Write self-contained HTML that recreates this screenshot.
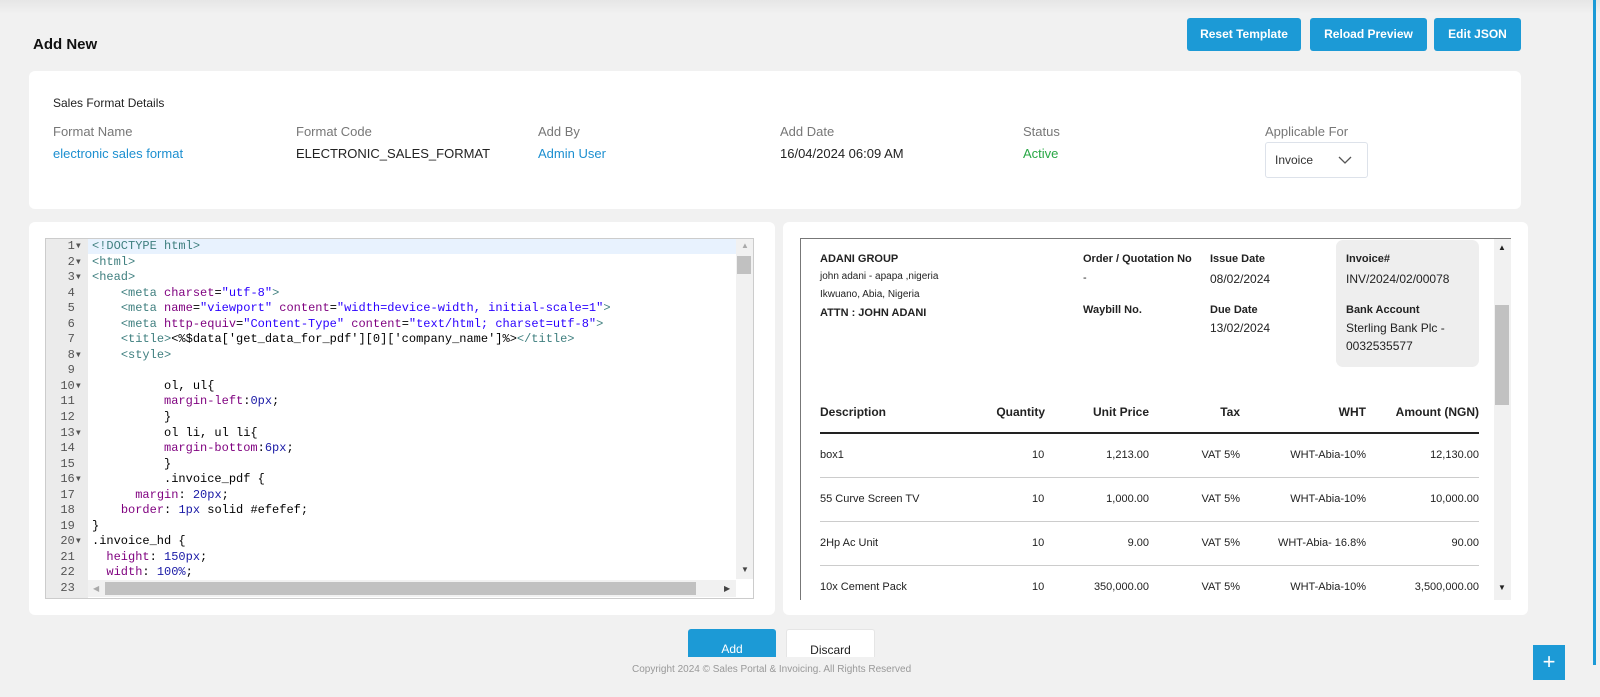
<!DOCTYPE html>
<html><head><meta charset="utf-8"><style>
*{margin:0;padding:0;box-sizing:border-box}
body{width:1600px;height:697px;background:#f1f1f1;font-family:"Liberation Sans",sans-serif;position:relative;overflow:hidden;color:#222}
.a{position:absolute;white-space:nowrap}
.card{position:absolute;background:#fff;border-radius:6px}
.btn{position:absolute;background:#1c9ad6;color:#fff;font-weight:bold;font-size:12px;border-radius:3px;text-align:center;line-height:33px;top:18px;height:33px}
.lbl{font-size:13px;color:#777}
.val{font-size:13px}
.code{position:absolute;left:92px;font-family:"Liberation Mono",monospace;font-size:12px;line-height:15.55px;color:#000}
.gut{position:absolute;left:46px;width:42px;text-align:right;padding-right:6px;font-family:"Liberation Mono",monospace;font-size:12px;line-height:15.55px;color:#555}
.t{color:#3f7f7f}.at{color:#7f007f}.s{color:#2a00ff}.p{color:#7f007f}.n{color:#1a1aa6}
.inv{font-size:11px;color:#222}
.b{font-weight:bold}
.hl{font-size:12px;font-weight:bold}
</style></head><body>
<div class="a" style="left:0;top:0;width:1600px;height:14px;background:linear-gradient(#e6e6e6,#f1f1f1)"></div>
<div class="a" style="left:33px;top:36px;font-size:15px;font-weight:bold;color:#111">Add New</div>
<div class="btn" style="left:1187px;width:114px">Reset Template</div>
<div class="btn" style="left:1310px;width:117px">Reload Preview</div>
<div class="btn" style="left:1434px;width:87px">Edit JSON</div>
<div class="a" style="left:1593px;top:0;width:3px;height:665px;background:#1c9ad6"></div>

<div class="card" style="left:29px;top:71px;width:1492px;height:138px"></div>
<div class="a" style="left:53px;top:96px;font-size:12px">Sales Format Details</div>
<div class="a lbl" style="left:53px;top:124px">Format Name</div>
<div class="a val" style="left:53px;top:146px;color:#1c8fd0">electronic sales format</div>
<div class="a lbl" style="left:296px;top:124px">Format Code</div>
<div class="a val" style="left:296px;top:146px">ELECTRONIC_SALES_FORMAT</div>
<div class="a lbl" style="left:538px;top:124px">Add By</div>
<div class="a val" style="left:538px;top:146px;color:#1c8fd0">Admin User</div>
<div class="a lbl" style="left:780px;top:124px">Add Date</div>
<div class="a val" style="left:780px;top:146px">16/04/2024 06:09 AM</div>
<div class="a lbl" style="left:1023px;top:124px">Status</div>
<div class="a val" style="left:1023px;top:146px;color:#28a745">Active</div>
<div class="a lbl" style="left:1265px;top:124px">Applicable For</div>
<div class="a" style="left:1265px;top:142px;width:103px;height:36px;border:1px solid #dde2ea;border-radius:3px;font-size:12px;padding:10px 0 0 9px;color:#333">Invoice
<svg style="position:absolute;left:72px;top:13px" width="14" height="9" viewBox="0 0 14 9"><path d="M1 1l6 6 6-6" fill="none" stroke="#555" stroke-width="1.3"/></svg></div>

<div class="card" style="left:29px;top:222px;width:746px;height:393px"></div>
<div class="a" style="left:45px;top:238px;width:709px;height:361px;border:1px solid #ccc;background:#fff"></div>
<div class="a" style="left:46px;top:239px;width:42px;height:359px;background:#ebebeb"></div>
<div class="a" style="left:88px;top:239px;width:648px;height:15px;background:#e8f2fe"></div>
<div class="a" style="left:736px;top:239px;width:17px;height:340px;background:#f1f1f1"></div>
<div class="a" style="left:737px;top:256px;width:14px;height:18px;background:#c1c1c1"></div>
<div class="a" style="left:88px;top:580px;width:648px;height:17px;background:#f1f1f1"></div>
<div class="a" style="left:105px;top:582px;width:591px;height:13px;background:#c1c1c1"></div>
<div class="a" style="left:741px;top:241px;font-size:8px;color:#aaa">▲</div>
<div class="a" style="left:741px;top:565px;font-size:8px;color:#444">▼</div>
<div class="a" style="left:724px;top:584px;font-size:8px;color:#444">▶</div>
<div class="a" style="left:93px;top:584px;font-size:8px;color:#aaa">◀</div>
<div class="gut" style="top:239px">1▾<br>2▾<br>3▾<br>4&nbsp;<br>5&nbsp;<br>6&nbsp;<br>7&nbsp;<br>8▾<br>9&nbsp;<br>10▾<br>11&nbsp;<br>12&nbsp;<br>13▾<br>14&nbsp;<br>15&nbsp;<br>16▾<br>17&nbsp;<br>18&nbsp;<br>19&nbsp;<br>20▾<br>21&nbsp;<br>22&nbsp;<br>23&nbsp;</div>
<div class="code" style="top:239px;white-space:pre"><span class="t">&lt;!DOCTYPE html&gt;</span>
<span class="t">&lt;html&gt;</span>
<span class="t">&lt;head&gt;</span>
    <span class="t">&lt;meta</span> <span class="at">charset</span>=<span class="s">"utf-8"</span><span class="t">&gt;</span>
    <span class="t">&lt;meta</span> <span class="at">name</span>=<span class="s">"viewport"</span> <span class="at">content</span>=<span class="s">"width=device-width, initial-scale=1"</span><span class="t">&gt;</span>
    <span class="t">&lt;meta</span> <span class="at">http-equiv</span>=<span class="s">"Content-Type"</span> <span class="at">content</span>=<span class="s">"text/html; charset=utf-8"</span><span class="t">&gt;</span>
    <span class="t">&lt;title&gt;</span>&lt;%$data['get_data_for_pdf'][0]['company_name']%&gt;<span class="t">&lt;/title&gt;</span>
    <span class="t">&lt;style&gt;</span>

          ol, ul{
          <span class="p">margin-left</span>:<span class="n">0px</span>;
          }
          ol li, ul li{
          <span class="p">margin-bottom</span>:<span class="n">6px</span>;
          }
          .invoice_pdf {
      <span class="p">margin</span>: <span class="n">20px</span>;
    <span class="p">border</span>: <span class="n">1px</span> solid #efefef;
}
.invoice_hd {
  <span class="p">height</span>: <span class="n">150px</span>;
  <span class="p">width</span>: <span class="n">100%</span>;
</div>

<div class="card" style="left:783px;top:222px;width:745px;height:393px"></div>
<div class="a" style="left:800px;top:238px;width:711px;height:362px;border-top:1px solid #777;border-left:1px solid #777;background:#fff"></div>
<div class="a" style="left:1494px;top:239px;width:17px;height:361px;background:#f1f1f1"></div>
<div class="a" style="left:1495px;top:305px;width:14px;height:100px;background:#c1c1c1"></div>
<div class="a" style="left:1498px;top:243px;font-size:8px">▲</div>
<div class="a" style="left:1498px;top:583px;font-size:8px">▼</div>
<div class="a" style="left:1336px;top:240px;width:143px;height:127px;background:#eee;border-radius:7px"></div>
<div class="a inv b" style="left:820px;top:253px">ADANI GROUP</div>
<div class="a" style="left:820px;top:271px;font-size:10px">john adani - apapa ,nigeria</div>
<div class="a" style="left:820px;top:289px;font-size:10px">Ikwuano, Abia, Nigeria</div>
<div class="a inv b" style="left:820px;top:307px">ATTN : JOHN ADANI</div>
<div class="a inv b" style="left:1083px;top:253px">Order / Quotation No</div>
<div class="a inv" style="left:1083px;top:272px">-</div>
<div class="a inv b" style="left:1083px;top:304px">Waybill No.</div>
<div class="a inv b" style="left:1210px;top:253px">Issue Date</div>
<div class="a" style="left:1210px;top:272px;font-size:12px">08/02/2024</div>
<div class="a inv b" style="left:1210px;top:304px">Due Date</div>
<div class="a" style="left:1210px;top:321px;font-size:12px">13/02/2024</div>
<div class="a inv b" style="left:1346px;top:253px">Invoice#</div>
<div class="a" style="left:1346px;top:272px;font-size:12px">INV/2024/02/00078</div>
<div class="a inv b" style="left:1346px;top:304px">Bank Account</div>
<div class="a" style="left:1346px;top:321px;font-size:12px">Sterling Bank Plc -</div>
<div class="a" style="left:1346px;top:339px;font-size:12px">0032535577</div>

<div class="a hl" style="left:820px;top:405px">Description</div>
<div class="a hl" style="right:555px;top:405px">Quantity</div>
<div class="a hl" style="right:451px;top:405px">Unit Price</div>
<div class="a hl" style="right:360px;top:405px">Tax</div>
<div class="a hl" style="right:234px;top:405px">WHT</div>
<div class="a hl" style="right:121px;top:405px">Amount (NGN)</div>
<div class="a" style="left:820px;top:432px;width:659px;height:2px;background:#222"></div>
<div class="a" style="left:820px;top:477px;width:659px;height:1px;background:#ccc"></div>
<div class="a" style="left:820px;top:521px;width:659px;height:1px;background:#ccc"></div>
<div class="a" style="left:820px;top:565px;width:659px;height:1px;background:#ccc"></div>

<div class="a inv" style="left:820px;top:449px">box1</div>
<div class="a inv" style="left:1032px;top:449px">10</div>
<div class="a inv" style="right:451px;top:449px">1,213.00</div>
<div class="a inv" style="right:360px;top:449px">VAT 5%</div>
<div class="a inv" style="right:234px;top:449px">WHT-Abia-10%</div>
<div class="a inv" style="right:121px;top:449px">12,130.00</div>

<div class="a inv" style="left:820px;top:493px">55 Curve Screen TV</div>
<div class="a inv" style="left:1032px;top:493px">10</div>
<div class="a inv" style="right:451px;top:493px">1,000.00</div>
<div class="a inv" style="right:360px;top:493px">VAT 5%</div>
<div class="a inv" style="right:234px;top:493px">WHT-Abia-10%</div>
<div class="a inv" style="right:121px;top:493px">10,000.00</div>

<div class="a inv" style="left:820px;top:537px">2Hp Ac Unit</div>
<div class="a inv" style="left:1032px;top:537px">10</div>
<div class="a inv" style="right:451px;top:537px">9.00</div>
<div class="a inv" style="right:360px;top:537px">VAT 5%</div>
<div class="a inv" style="right:234px;top:537px">WHT-Abia- 16.8%</div>
<div class="a inv" style="right:121px;top:537px">90.00</div>

<div class="a inv" style="left:820px;top:581px">10x Cement Pack</div>
<div class="a inv" style="left:1032px;top:581px">10</div>
<div class="a inv" style="right:451px;top:581px">350,000.00</div>
<div class="a inv" style="right:360px;top:581px">VAT 5%</div>
<div class="a inv" style="right:234px;top:581px">WHT-Abia-10%</div>
<div class="a inv" style="right:121px;top:581px">3,500,000.00</div>

<div class="a" style="left:688px;top:629px;width:88px;height:38px;background:#1c9ad6;border-radius:3px 3px 0 0;color:#fff;font-size:12px;text-align:center;padding-top:13px">Add</div>
<div class="a" style="left:786px;top:629px;width:89px;height:38px;background:#fff;border:1px solid #e5e5e5;border-bottom:none;border-radius:3px 3px 0 0;font-size:12px;text-align:center;padding-top:13px">Discard</div>
<div class="a" style="left:0;top:657px;width:1592px;height:40px;background:#f1f1f1"></div>
<div class="a" style="left:632px;top:664px;font-size:10px;color:#999">Copyright 2024 © Sales Portal &amp; Invoicing. All Rights Reserved</div>
<div class="a" style="left:1533px;top:645px;width:32px;height:35px;background:#1c9ad6;color:#fff;font-size:22px;text-align:center;line-height:33px">+</div>
</body></html>
